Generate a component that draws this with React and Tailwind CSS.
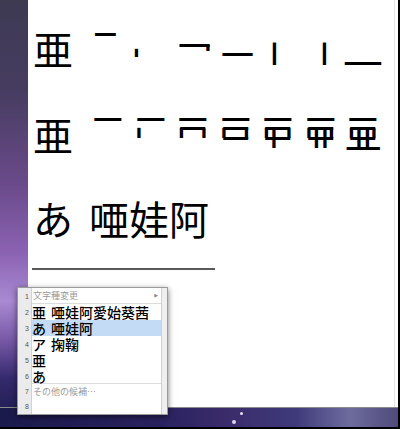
import React from "react";

const HF = 36, HL = 0.06, HR = 0.94, HCY = 0.53;
const VF = 40, VCX = 0.5, VT = 0.106, VB = 1.006;

function HS({ x1, x2, cy, ox, oy }) {
  const sx = (x2 - x1) / ((HR - HL) * HF);
  return (
    <span
      className="absolute leading-none origin-top-left text-black"
      style={{ left: x1 - ox - HL * HF * sx, top: cy - oy - HCY * HF, fontSize: HF, transform: `scaleX(${sx})` }}
    >
      一
    </span>
  );
}

function VS({ cx, y1, y2, ox, oy }) {
  const sy = (y2 - y1) / ((VB - VT) * VF);
  return (
    <span
      className="absolute leading-none origin-top-left text-black"
      style={{ left: cx - ox - VCX * VF, top: y1 - oy - VT * VF * sy, fontSize: VF, transform: `scaleY(${sy})` }}
    >
      丨
    </span>
  );
}

function Stroke({ s, ox, oy }) {
  return s.t === "h" ? <HS {...s} ox={ox} oy={oy} /> : <VS {...s} ox={ox} oy={oy} />;
}

const ROW1 = [
  { t: "h", x1: 95, x2: 115, cy: 34.5 },
  { t: "v", cx: 136.5, y1: 49, y2: 57 },
  { t: "h", x1: 180, x2: 209, cy: 45 },
  { t: "v", cx: 208, y1: 45, y2: 51 },
  { t: "h", x1: 223, x2: 252, cy: 54.5 },
  { t: "v", cx: 274.5, y1: 43, y2: 65 },
  { t: "v", cx: 324.5, y1: 43, y2: 65 },
  { t: "h", x1: 345, x2: 380, cy: 63.5 },
];

// stroke template of 亜, relative to a 32x32 ink box
const T = [
  [{ t: "h", x1: 3, x2: 29, cy: 1.5 }],
  [{ t: "v", cx: 4.5, y1: 10, y2: 20 }],
  [
    { t: "h", x1: 4, x2: 28, cy: 10.5 },
    { t: "v", cx: 27, y1: 10.5, y2: 20 },
  ],
  [{ t: "h", x1: 4, x2: 28, cy: 20 }],
  [{ t: "v", cx: 12, y1: 10.5, y2: 30 }],
  [{ t: "v", cx: 20.5, y1: 10.5, y2: 30 }],
  [{ t: "h", x1: 0, x2: 32, cy: 30.5 }],
];

const X0 = [92, 134.5, 177, 219.5, 262, 304.5, 347];

function row2Strokes() {
  const out = [];
  X0.forEach((x0, i) => {
    for (let k = 0; k <= i; k++) {
      T[k].forEach((s, j) => {
        const m =
          s.t === "h"
            ? { t: "h", x1: s.x1 + x0, x2: s.x2 + x0, cy: s.cy + 118 }
            : { t: "v", cx: s.cx + x0, y1: s.y1 + 118, y2: s.y2 + 118 };
        out.push(<Stroke key={`${i}-${k}-${j}`} s={m} ox={33} oy={114} />);
      });
    }
  });
  return out;
}

function Num({ n }) {
  return (
    <div className="w-[14px] shrink-0 bg-[#ebebeb] border-r border-[#d2d2d2] flex items-center justify-end pr-[2px] text-[7px] leading-none text-[#555] font-['Liberation_Sans',sans-serif]">
      {n}
    </div>
  );
}

export default function App() {
  return (
    <div className="relative w-[400px] h-[429px] overflow-hidden border-r-2 border-b-2 border-black bg-black font-['Noto_Sans_CJK_JP','Noto_Sans_CJK_SC',sans-serif]">
      <div className="flex h-[407px]">
        <div className="w-[28px] shrink-0 bg-[linear-gradient(180deg,#3d3a52_0%,#463c60_22%,#6a4a8a_45%,#8a62b2_62%,#a98ad2_74%,#7456a4_84%,#342a6c_93%,#242058_100%)]" />
        <div className="flex-1 flex bg-white">
          <div className="flex-1 pt-[28px] pl-[5px] text-black">
            <div className="relative flex h-[40px]">
              <span className="text-[40px] leading-none">亜</span>
              {ROW1.map((s, i) => (
                <Stroke key={i} s={s} ox={33} oy={28} />
              ))}
            </div>
            <div className="relative flex h-[40px] mt-[46px]">
              <span className="text-[40px] leading-none">亜</span>
              {row2Strokes()}
            </div>
            <div className="flex h-[40px] mt-[44px] text-[40px] leading-none">
              <span>あ</span>
              <span className="ml-[16px]">唖娃阿</span>
            </div>
            <div className="mt-[30px] -ml-[1px] h-[2px] w-[183px] bg-[#5a5a5a]" />
          </div>
          <div className="w-[4px] border-l border-[#e4e4e4]" />
        </div>
      </div>
      <div className="relative h-[20px] border-t border-[#8a8a8a] bg-[linear-gradient(90deg,#1b1a4c_0%,#2a2260_40%,#3b2c6c_58%,#3e3a7a_74%,#6e6c9e_88%,#4e4a7a_100%)]">
        <div className="absolute left-[240px] top-[4px] w-[3px] h-[3px] rounded-full bg-[#e6def2]" />
        <div className="absolute left-[232px] top-[12px] w-[4px] h-[4px] rounded-full bg-[#ddd4ee]" />
      </div>

      <div className="absolute left-[17px] top-[287px] w-[151px] h-[128px] flex border border-[#9a9a9a] bg-white shadow-[0_2px_6px_rgba(0,0,0,0.55)]">
        <div className="flex-1 flex flex-col">
          <div className="flex h-[16px]">
            <Num n="1" />
            <div className="flex-1 flex items-center justify-between pl-[1px] pr-[3px] border-b border-[#dcdcdc] text-[9px] leading-none text-[#9a9a9a]">
              <span>文字種変更</span>
              <span className="text-[5px] text-[#8a8a8a] font-['DejaVu_Sans',sans-serif]">▶</span>
            </div>
          </div>
          <div className="flex h-[16px]">
            <Num n="2" />
            <div className="flex-1 flex items-center text-[14px] font-medium leading-none text-black">
              <span>亜</span>
              <span className="ml-[5px]">唖娃阿愛始葵茜</span>
            </div>
          </div>
          <div className="flex h-[16px]">
            <Num n="3" />
            <div className="flex-1 flex items-center bg-[#c3dbf5] text-[14px] font-medium leading-none text-black">
              <span>あ</span>
              <span className="ml-[5px]">唖娃阿</span>
            </div>
          </div>
          <div className="flex h-[16px]">
            <Num n="4" />
            <div className="flex-1 flex items-center text-[14px] font-medium leading-none text-black">
              <span>ア</span>
              <span className="ml-[5px]">掬鞠</span>
            </div>
          </div>
          <div className="flex h-[16px]">
            <Num n="5" />
            <div className="flex-1 flex items-center text-[14px] font-medium leading-none text-black">
              <span>亜</span>
            </div>
          </div>
          <div className="flex h-[16px]">
            <Num n="6" />
            <div className="flex-1 flex items-center border-b border-[#dcdcdc] text-[14px] font-medium leading-none text-black">
              <span>あ</span>
            </div>
          </div>
          <div className="flex h-[15px]">
            <Num n="7" />
            <div className="flex-1 flex items-center pl-[1px] text-[9px] leading-none text-[#9a9a9a]">
              <span>その他の候補…</span>
            </div>
          </div>
          <div className="flex flex-1">
            <Num n="8" />
            <div className="flex-1" />
          </div>
        </div>
        <div className="w-[6px] shrink-0 border-l border-[#cfcfcf] bg-[#efefef]" />
      </div>
    </div>
  );
}
